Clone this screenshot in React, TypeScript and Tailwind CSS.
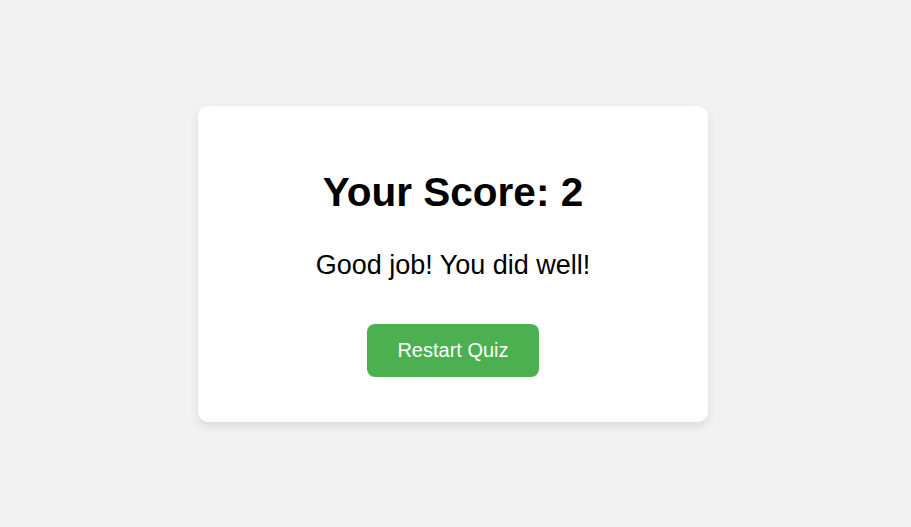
const ResultCard = () => {
  return (
    <div className="w-[510px] rounded-[10px] bg-white pt-[63px] pb-[45px] text-center shadow-[0_4px_10px_rgba(0,0,0,0.1)]">
      <h1 className="text-[40.5px] leading-[46px] font-bold text-black">Your Score: 2</h1>
      <p className="mt-[35px] text-[27px] leading-[30px] text-black">Good job! You did well!</p>
      <button className="mt-[44px] rounded-[8px] bg-[#4caf50] px-[30px] py-[15px] text-[20px] leading-[23px] text-white">
        Restart Quiz
      </button>
    </div>
  );
};

export default function App() {
  return (
    <div
      className="flex h-[527px] w-full items-center justify-center bg-[#f2f2f2] pr-[5px]"
      style={{ fontFamily: '"Liberation Sans", Arial, sans-serif' }}
    >
      <ResultCard />
    </div>
  );
}
